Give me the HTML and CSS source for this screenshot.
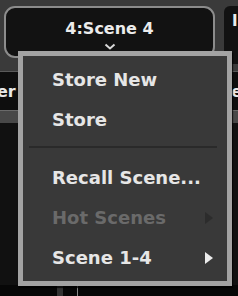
FILE: index.html
```html
<!DOCTYPE html>
<html lang="en">
<head>
    <meta charset="UTF-8">
    <title>Scene menu</title>
    <link rel="stylesheet" href="styles.css">
</head>
<body>

<div class="screen">
    <div class="toolbar">
        <div class="scene-button">
            <span class="scene-name">4:Scene 4</span>
            <svg class="chevron" width="12" height="7" viewBox="0 0 12 7">
                <path d="M1.5 1.5 L6 5.5 L10.5 1.5" fill="none" stroke="#d8d8d8" stroke-width="2"/>
            </svg>
        </div>
        <div class="side-panel">I</div>
    </div>
    <div class="strip">
        <span class="strip-text">er T</span>
        <span class="strip-text right">e</span>
    </div>
    <div class="band"></div>
    <div class="lower"></div>
    <div class="footer">
        <div class="fader"></div>
        <div class="fader-line"></div>
    </div>

    <div class="menu">
        <div class="menu-item">Store New</div>
        <div class="menu-item">Store</div>
        <div class="separator"></div>
        <div class="menu-item">Recall Scene...</div>
        <div class="menu-item disabled">Hot Scenes <span class="arrow"></span></div>
        <div class="menu-item">Scene 1-4 <span class="arrow"></span></div>
    </div>
</div>

</body>
</html>
```

FILE: styles.css
```css
body {
    margin: 0;
    background-color: #0f0f0f;
    font-family: "DejaVu Sans", "Open Sans", sans-serif;
    overflow: hidden;
}
.screen {
    position: relative;
    width: 238px;
    height: 296px;
    overflow: hidden;
}
.toolbar {
    display: flex;
    align-items: flex-start;
    gap: 9px;
    padding: 6px 0 0 4px;
    height: 72px;
    box-sizing: border-box;
    background-color: #3a3a3a;
    border-bottom: 1px solid #5a5a5a;
}
.scene-button {
    width: 211px;
    height: 52px;
    box-sizing: border-box;
    border: 2px solid #8c8c8c;
    border-radius: 11px;
    background-color: #121212;
    display: flex;
    flex-direction: column;
    align-items: center;
    padding-top: 12px;
    flex-shrink: 0;
}
.scene-name {
    color: #ececec;
    font-weight: 700;
    font-size: 16px;
    line-height: 18px;
}
.chevron {
    margin-top: 5px;
}
.side-panel {
    flex: 1;
    height: 52px;
    background-color: #121212;
    border-radius: 6px 0 0 0;
    color: #ececec;
    font-size: 15px;
    font-weight: 700;
    padding: 6px 0 0 8px;
}
.strip {
    height: 38px;
    display: flex;
    justify-content: space-between;
    align-items: center;
    background-color: #0e0e0e;
}
.strip-text {
    color: #e8e8e8;
    font-weight: 700;
    font-size: 16px;
    margin-left: -3px;
}
.strip-text.right {
    margin-right: -4px;
}
.band {
    height: 12px;
    background-color: #484848;
    border-top: 1px solid #6a6a6a;
}
.lower {
    height: 162px;
    background-color: #111111;
}
.footer {
    display: flex;
    gap: 14px;
    height: 12px;
    padding-left: 57px;
    background-color: #070707;
}
.fader {
    width: 6px;
    background-color: #333333;
}
.fader-line {
    width: 1px;
    background-color: #888888;
}
.menu {
    position: absolute;
    left: 18px;
    top: 51px;
    width: 214px;
    height: 235px;
    box-sizing: border-box;
    border: 5px solid #a3a3a3;
    background-color: #393939;
    box-shadow: 1px 2px 1px rgba(0, 0, 0, 0.7);
    padding-top: 4px;
}
.menu-item {
    position: relative;
    height: 40px;
    line-height: 40px;
    padding-left: 29px;
    color: #e6e6e6;
    font-weight: 700;
    font-size: 18px;
}
.menu-item.disabled {
    color: #6a6a6a;
}
.separator {
    height: 2px;
    margin: 6px 10px 10px 6px;
    background-color: #2a2a2a;
}
.arrow {
    position: absolute;
    left: 182px;
    top: 14px;
    width: 0;
    height: 0;
    border-top: 6px solid transparent;
    border-bottom: 6px solid transparent;
    border-left: 8px solid #ececec;
}
.disabled .arrow {
    border-left-color: #2c2c2c;
}
```
